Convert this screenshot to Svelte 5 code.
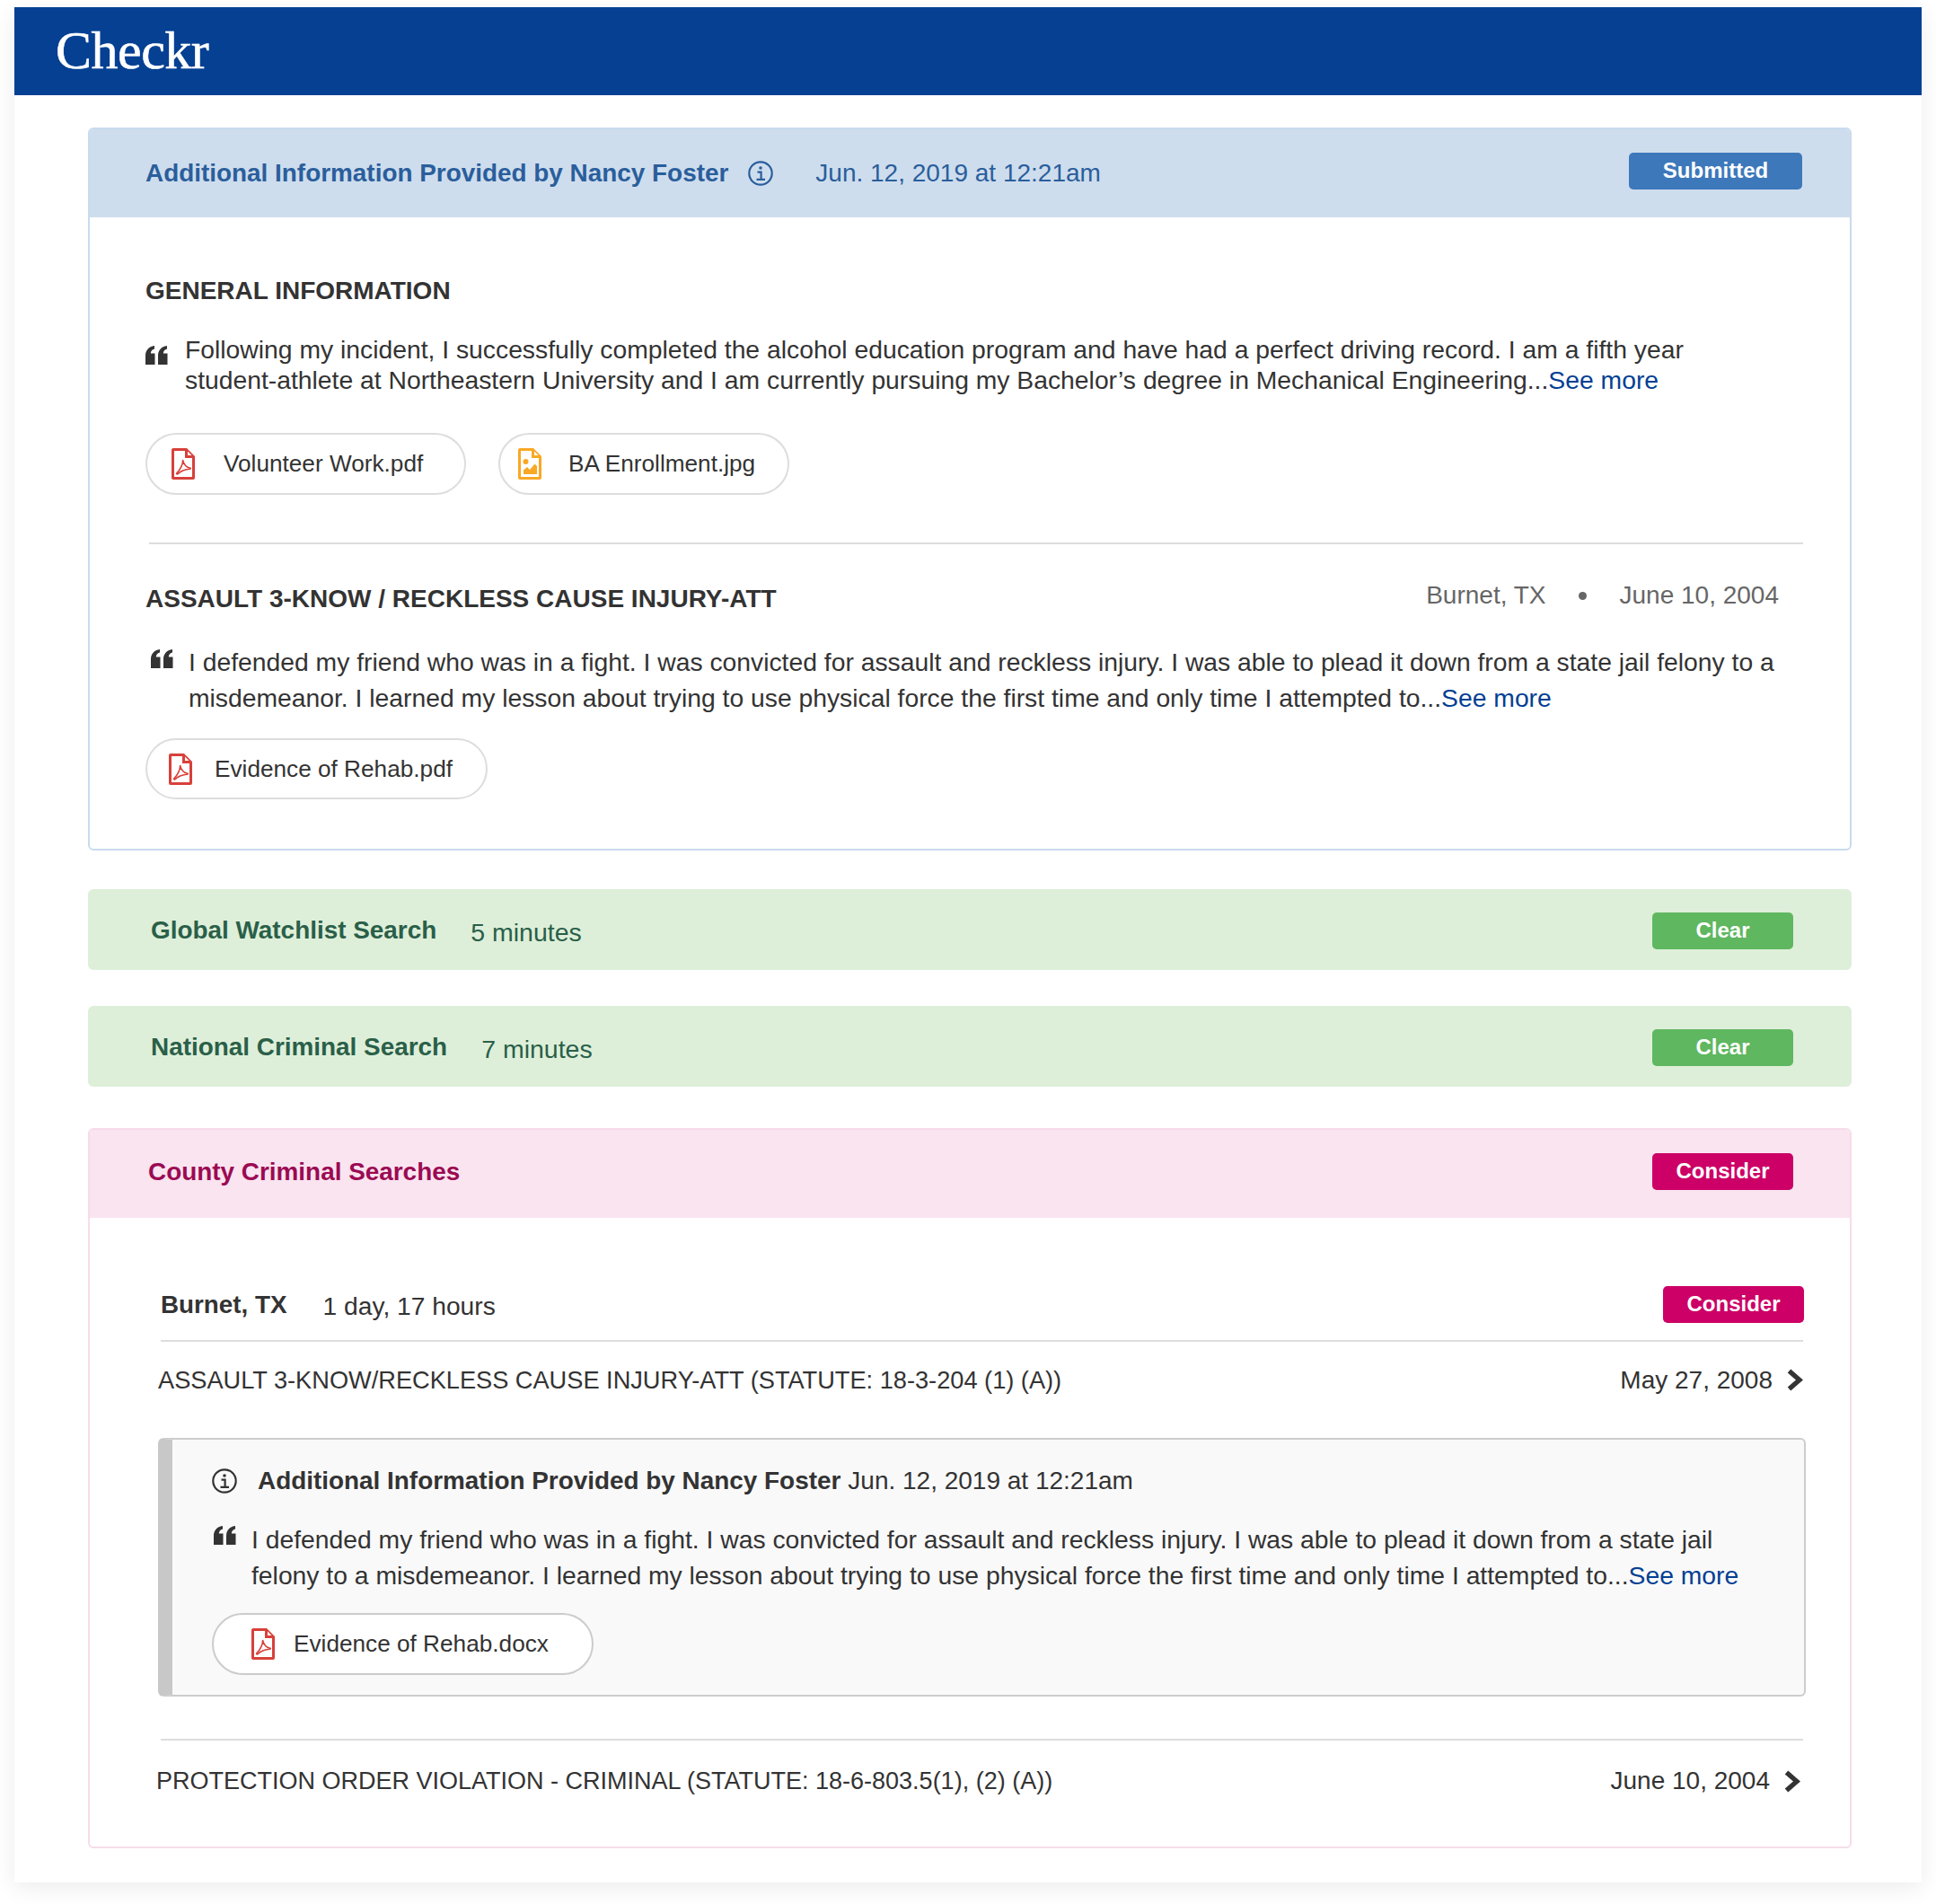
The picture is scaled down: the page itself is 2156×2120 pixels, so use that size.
<script>
  // file chips and quotes repeat through the report, keep the icons in one place
</script>

{#snippet pdfIcon()}
  <svg class="file-icon" viewBox="0 0 26 35" aria-hidden="true">
    <path fill="#d8403a" fill-rule="evenodd" d="M2 0H17L26 9V33a2 2 0 0 1-2 2H2a2 2 0 0 1-2-2V2a2 2 0 0 1 2-2ZM3 3V32H23V11H15V3ZM18 3.5V8H22.5Z" />
    <path fill="none" stroke="#d8403a" stroke-width="1.6" stroke-linejoin="round" d="M12.6 13.5C12.8 17.5 10 24 6 27.5C5 28.5 6 29.4 7 28.6C10 26 16 23 20.5 23.2C21.5 23.2 21.5 22 20.5 22C17 21.8 13.6 18.5 12.6 13.5Z" />
  </svg>
{/snippet}

{#snippet imageIcon()}
  <svg class="file-icon" viewBox="0 0 26 35" aria-hidden="true">
    <path fill="#f9a825" fill-rule="evenodd" d="M2 0H17L26 9V33a2 2 0 0 1-2 2H2a2 2 0 0 1-2-2V2a2 2 0 0 1 2-2ZM3 3V32H23V11H15V3ZM18 3.5V8H22.5Z" />
    <circle cx="8.5" cy="15" r="3" fill="#f9a825" />
    <path fill="#f9a825" d="M6 29V24.5L10 21L13 24L18.5 17.5L21 20V29Z" />
  </svg>
{/snippet}

{#snippet infoIcon()}
  <svg class="info-icon" viewBox="0 0 28 28" aria-hidden="true">
    <circle cx="14" cy="14" r="12.7" fill="none" stroke="currentColor" stroke-width="2.2" />
    <circle cx="14" cy="8" r="1.8" fill="currentColor" />
    <path fill="none" stroke="currentColor" stroke-width="2.2" d="M10.5 12.6H14.6V20.5M9.5 20.8H19" />
  </svg>
{/snippet}

{#snippet quoteIcon()}
  <svg class="quote-icon" viewBox="0 0 25 21" aria-hidden="true">
    <path fill="#333" d="M0 21V11C0 5 3.5 1 10 0V3.5C7 4.5 6 6 5.8 8.5H10.5V21ZM14 21V11C14 5 17.5 1 24 0V3.5C21 4.5 20 6 19.8 8.5H24.5V21Z" />
  </svg>
{/snippet}

{#snippet chevron()}
  <svg class="chevron" viewBox="0 0 19 25" aria-hidden="true">
    <path fill="none" stroke="#333" stroke-width="5.4" d="M3.5 2.5L15 12.5L3.5 22.5" />
  </svg>
{/snippet}

<div class="page">
  <header class="brand"><span class="logo">Checkr</span></header>

  <main class="content">
    <section class="panel panel-blue">
      <div class="panel-head">
        <h2>Additional Information Provided by Nancy Foster</h2>
        {@render infoIcon()}
        <span class="head-date">Jun. 12, 2019 at 12:21am</span>
        <span class="badge badge-blue">Submitted</span>
      </div>

      <div class="general">
        <h3>GENERAL INFORMATION</h3>
        <div class="quote quote-tight">
          {@render quoteIcon()}
          <p>Following my incident, I successfully completed the alcohol education program and have had a perfect driving record. I am a fifth year student-athlete at Northeastern University and I am currently pursuing my Bachelor’s degree in Mechanical Engineering...<a href="#more">See more</a></p>
        </div>
        <div class="chips">
          <span class="chip chip-volunteer">{@render pdfIcon()}Volunteer Work.pdf</span>
          <span class="chip chip-enroll">{@render imageIcon()}BA Enrollment.jpg</span>
        </div>
      </div>

      <div class="offense">
        <div class="offense-head">
          <h3>ASSAULT 3-KNOW / RECKLESS CAUSE INJURY-ATT</h3>
          <span class="offense-meta">Burnet, TX<i class="dot"></i>June 10, 2004</span>
        </div>
        <div class="quote quote-offense">
          {@render quoteIcon()}
          <p>I defended my friend who was in a fight. I was convicted for assault and reckless injury. I was able to plead it down from a state jail felony to a misdemeanor. I learned my lesson about trying to use physical force the first time and only time I attempted to...<a href="#more">See more</a></p>
        </div>
        <span class="chip chip-rehab">{@render pdfIcon()}Evidence of Rehab.pdf</span>
      </div>
    </section>

    <section class="result result-first">
      <h2>Global Watchlist Search</h2>
      <span class="duration">5 minutes</span>
      <span class="badge badge-green">Clear</span>
    </section>

    <section class="result result-second">
      <h2>National Criminal Search</h2>
      <span class="duration">7 minutes</span>
      <span class="badge badge-green">Clear</span>
    </section>

    <section class="panel panel-pink">
      <div class="panel-head">
        <h2>County Criminal Searches</h2>
        <span class="badge badge-pink">Consider</span>
      </div>

      <div class="county">
        <div class="county-head">
          <strong>Burnet, TX</strong>
          <span>1 day, 17 hours</span>
          <span class="badge badge-pink">Consider</span>
        </div>

        <div class="charge charge-first">
          <span>ASSAULT 3-KNOW/RECKLESS CAUSE INJURY-ATT (STATUTE: 18-3-204 (1) (A))</span>
          <span class="charge-date">May 27, 2008{@render chevron()}</span>
        </div>

        <div class="note">
          <div class="note-head">
            {@render infoIcon()}
            <strong>Additional Information Provided by Nancy Foster</strong>
            <span>Jun. 12, 2019 at 12:21am</span>
          </div>
          <div class="quote quote-note">
            {@render quoteIcon()}
            <p>I defended my friend who was in a fight. I was convicted for assault and reckless injury. I was able to plead it down from a state jail felony to a misdemeanor. I learned my lesson about trying to use physical force the first time and only time I attempted to...<a href="#more">See more</a></p>
          </div>
          <span class="chip chip-docx">{@render pdfIcon()}Evidence of Rehab.docx</span>
        </div>

        <hr class="rule" />

        <div class="charge charge-second">
          <span>PROTECTION ORDER VIOLATION - CRIMINAL (STATUTE: 18-6-803.5(1), (2) (A))</span>
          <span class="charge-date">June 10, 2004{@render chevron()}</span>
        </div>
      </div>
    </section>
  </main>
</div>

<style>
  :global(body) {
    margin: 0;
    background: #fff;
  }

  .page {
    width: 2124px;
    margin: 8px 16px 25px;
    background: #fff;
    box-shadow: 0 6px 24px rgba(0, 0, 0, 0.08);
    font-family: "Liberation Sans", Arial, sans-serif;
    font-size: 28px;
    color: #333;
  }

  h2,
  h3,
  p {
    margin: 0;
  }

  a {
    color: #043f93;
    text-decoration: none;
  }

  .brand {
    height: 98px;
    display: flex;
    align-items: center;
    padding-left: 46px;
    background: #054093;
  }

  .logo {
    font-family: "Liberation Serif", "Times New Roman", serif;
    font-size: 60px;
    letter-spacing: -0.5px;
    color: #fff;
    -webkit-text-stroke: 0.6px #fff;
    position: relative;
    top: -1px;
  }

  .content {
    padding: 36px 78px 38px 82px;
  }

  .panel {
    border: 2px solid;
    border-radius: 6px;
    overflow: hidden;
  }

  .panel-blue {
    height: 805px;
    box-sizing: border-box;
    border-color: #c9dbef;
  }

  .panel-pink {
    height: 802px;
    margin-top: 46px;
    box-sizing: border-box;
    border-color: #f7dcea;
  }

  .panel-head {
    display: flex;
    align-items: center;
    height: 98px;
  }

  .panel-head h2 {
    font-size: 27.9px;
    line-height: 1;
  }

  .panel-blue .panel-head {
    padding: 0 53px 0 62px;
    background: #cedded;
    color: #2a5e9c;
  }

  .panel-blue .info-icon {
    margin-left: 22px;
  }

  .head-date {
    margin-left: 47px;
  }

  .panel-pink .panel-head {
    padding: 0 63px 0 65px;
    background: #f9e4f0;
    color: #9b0a52;
  }

  .panel-pink .panel-head h2 {
    margin-top: -4px;
  }

  .badge {
    margin-left: auto;
    display: flex;
    align-items: center;
    justify-content: center;
    height: 41px;
    border-radius: 5px;
    font-size: 24px;
    font-weight: 700;
    color: #fff;
  }

  .badge-blue {
    width: 193px;
    margin-top: -6px;
    background: #3d78ba;
  }

  .badge-green {
    width: 157px;
    background: #5fb760;
  }

  .badge-pink {
    width: 157px;
    margin-top: -6px;
    background: #cc0066;
  }

  .info-icon {
    flex: none;
    width: 28px;
    height: 28px;
  }

  .file-icon {
    flex: none;
    width: 26px;
    height: 35px;
  }

  .quote-icon {
    flex: none;
    width: 25px;
    height: 21px;
  }

  .general {
    padding: 65px 52px 0 62px;
    height: 362px;
    box-sizing: border-box;
  }

  h3 {
    font-size: 28px;
    line-height: 34px;
  }

  .quote {
    display: flex;
    align-items: flex-start;
    font-size: 28.3px;
  }

  .quote-tight {
    margin-top: 31px;
    gap: 19px;
    line-height: 34.4px;
  }

  .quote-tight p {
    max-width: 1730px;
  }

  .quote-tight .quote-icon {
    margin-top: 13px;
  }

  .chips {
    display: flex;
    gap: 36px;
    margin-top: 41px;
  }

  .chip {
    display: inline-flex;
    align-items: center;
    box-sizing: border-box;
    border: 2px solid #ddd;
    border-radius: 36px;
    background: #fff;
    line-height: 1;
    font-size: 26.2px;
  }

  .chip-volunteer {
    width: 357px;
    height: 69px;
    padding-left: 27px;
    gap: 32px;
  }

  .chip-enroll {
    width: 324px;
    height: 69px;
    padding-left: 20px;
    gap: 30px;
  }

  .chip-rehab {
    width: 381px;
    height: 68px;
    margin-left: -4px;
    padding-left: 24px;
    gap: 25px;
  }

  .chip-docx {
    width: 425px;
    height: 69px;
    padding-left: 42px;
    gap: 21px;
    margin-top: 22px;
    border-color: #ccc;
  }

  .offense {
    margin: 0 52px 0 66px;
    padding-top: 44px;
    border-top: 2px solid #ddd;
  }

  .offense-head {
    display: flex;
    align-items: flex-start;
    margin-left: -4px;
  }

  .offense-meta {
    margin-left: auto;
    margin-right: 27px;
    margin-top: -4px;
    color: #666;
    line-height: 34px;
    display: flex;
    align-items: center;
  }

  .dot {
    width: 9px;
    height: 9px;
    margin: 0 37px 0 36px;
    border-radius: 50%;
    background: #666;
  }

  .quote-offense {
    margin: 33px 0 25px 2px;
    gap: 17px;
    line-height: 40px;
  }

  .quote-offense .quote-icon {
    margin-top: 6px;
  }

  .result {
    display: flex;
    align-items: center;
    height: 90px;
    padding: 2px 65px 0 70px;
    box-sizing: border-box;
    border-radius: 6px;
    background: #deefd9;
    color: #2a5f49;
  }

  .result h2 {
    font-size: 27.9px;
    line-height: 1;
  }

  .result .duration {
    margin-left: 38px;
    margin-top: 4px;
    font-size: 28.5px;
  }

  .result-first {
    margin-top: 43px;
  }

  .result-second {
    margin-top: 40px;
  }

  .county {
    padding: 0 52px 0 79px;
  }

  .county-head {
    display: flex;
    align-items: center;
    height: 138px;
    padding-top: 58px;
    box-sizing: border-box;
    border-bottom: 2px solid #ddd;
  }

  .county-head strong {
    font-size: 27.8px;
  }

  .county-head span:not(.badge) {
    margin-left: 40px;
    margin-top: 2px;
    font-size: 28.2px;
  }

  .county-head .badge {
    margin-top: -2px;
    margin-right: -1px;
  }

  .charge {
    display: flex;
    justify-content: space-between;
    align-items: center;
  }

  .charge-date {
    display: inline-flex;
    align-items: center;
    gap: 15px;
    font-size: 28px;
  }

  .chevron {
    width: 19px;
    height: 25px;
  }

  .charge-first {
    margin-left: -3px;
    height: 107px;
    padding-bottom: 22px;
    box-sizing: border-box;
    font-size: 27.2px;
  }

  .rule {
    height: 2px;
    margin: 47px 0 0;
    border: 0;
    background: #ddd;
  }

  .charge-second {
    margin: 0 3px 0 -5px;
    height: 90px;
    box-sizing: border-box;
    font-size: 27px;
  }

  .note {
    margin: 0 -3px 0 -3px;
    height: 288px;
    box-sizing: border-box;
    padding: 30px 60px 0 44px;
    border: 2px solid #ccc;
    border-left: 16px solid #c8c8c8;
    border-radius: 6px;
    background: #f9f9f9;
  }

  .note-head {
    display: flex;
    align-items: center;
  }

  .note-head strong {
    margin-left: 23px;
    font-size: 27.9px;
  }

  .note-head span {
    margin-left: 8px;
  }

  .quote-note {
    margin: 29px 0 0 2px;
    gap: 17px;
    line-height: 40px;
  }

  .quote-note .quote-icon {
    margin-top: 5px;
  }
</style>
